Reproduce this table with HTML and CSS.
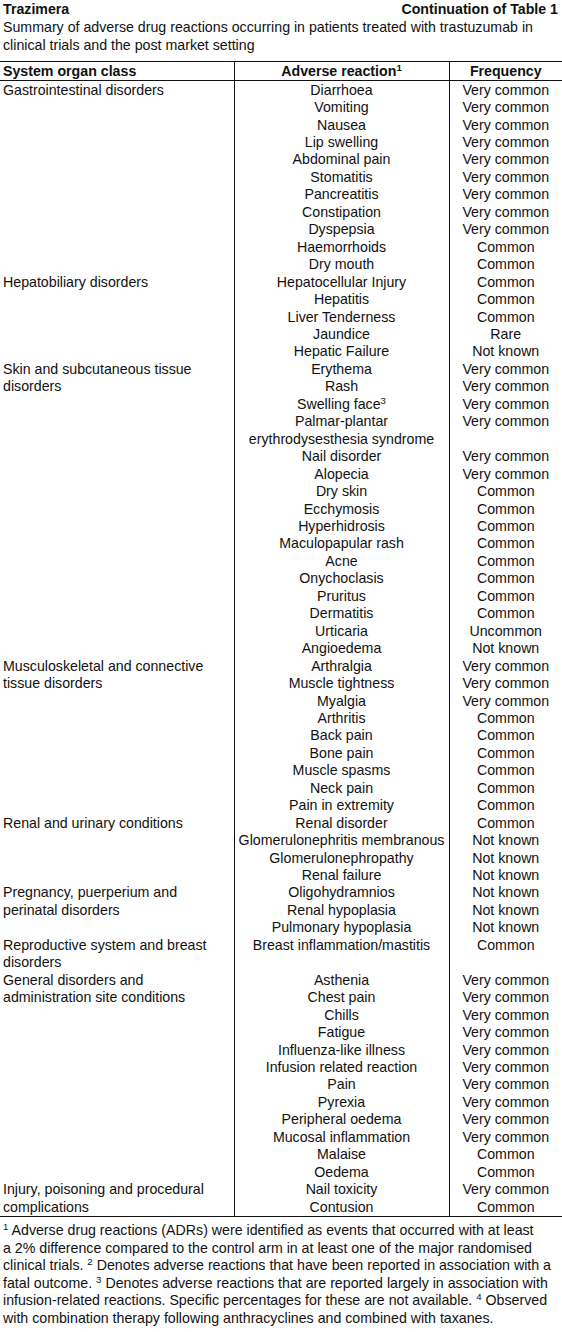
FILE: index.html
```html
<!DOCTYPE html>
<html lang="en">
<head>
<meta charset="utf-8">
<title>Trazimera – Continuation of Table 1</title>
<link rel="stylesheet" href="styles.css">
</head>
<body>
<div class="page">
  <div class="titlebar">
    <span class="brand">Trazimera</span>
    <span class="cont">Continuation of Table 1</span>
  </div>
  <p class="caption">Summary of adverse drug reactions occurring in patients treated with trastuzumab in<br>clinical trials and the post market setting</p>

  <table class="adr">
    <colgroup>
      <col class="c-soc">
      <col class="c-react">
      <col class="c-freq">
    </colgroup>
    <thead>
      <tr>
        <th class="soc">System organ class</th>
        <th>Adverse reaction<sup>1</sup></th>
        <th>Frequency</th>
      </tr>
    </thead>
    <tbody>
      <tr class="first"><td class="soc" rowspan="11">Gastrointestinal disorders</td><td>Diarrhoea</td><td>Very common</td></tr>
      <tr><td>Vomiting</td><td>Very common</td></tr>
      <tr><td>Nausea</td><td>Very common</td></tr>
      <tr><td>Lip swelling</td><td>Very common</td></tr>
      <tr><td>Abdominal pain</td><td>Very common</td></tr>
      <tr><td>Stomatitis</td><td>Very common</td></tr>
      <tr><td>Pancreatitis</td><td>Very common</td></tr>
      <tr><td>Constipation</td><td>Very common</td></tr>
      <tr><td>Dyspepsia</td><td>Very common</td></tr>
      <tr><td>Haemorrhoids</td><td>Common</td></tr>
      <tr><td>Dry mouth</td><td>Common</td></tr>

      <tr><td class="soc" rowspan="5">Hepatobiliary disorders</td><td>Hepatocellular Injury</td><td>Common</td></tr>
      <tr><td>Hepatitis</td><td>Common</td></tr>
      <tr><td>Liver Tenderness</td><td>Common</td></tr>
      <tr><td>Jaundice</td><td>Rare</td></tr>
      <tr><td>Hepatic Failure</td><td>Not known</td></tr>

      <tr><td class="soc" rowspan="16">Skin and subcutaneous tissue<br>disorders</td><td>Erythema</td><td>Very common</td></tr>
      <tr><td>Rash</td><td>Very common</td></tr>
      <tr><td>Swelling face<sup>3</sup></td><td>Very common</td></tr>
      <tr><td>Palmar-plantar<br>erythrodysesthesia syndrome</td><td>Very common</td></tr>
      <tr><td>Nail disorder</td><td>Very common</td></tr>
      <tr><td>Alopecia</td><td>Very common</td></tr>
      <tr><td>Dry skin</td><td>Common</td></tr>
      <tr><td>Ecchymosis</td><td>Common</td></tr>
      <tr><td>Hyperhidrosis</td><td>Common</td></tr>
      <tr><td>Maculopapular rash</td><td>Common</td></tr>
      <tr><td>Acne</td><td>Common</td></tr>
      <tr><td>Onychoclasis</td><td>Common</td></tr>
      <tr><td>Pruritus</td><td>Common</td></tr>
      <tr><td>Dermatitis</td><td>Common</td></tr>
      <tr><td>Urticaria</td><td>Uncommon</td></tr>
      <tr><td>Angioedema</td><td>Not known</td></tr>

      <tr><td class="soc" rowspan="9">Musculoskeletal and connective<br>tissue disorders</td><td>Arthralgia</td><td>Very common</td></tr>
      <tr><td>Muscle tightness</td><td>Very common</td></tr>
      <tr><td>Myalgia</td><td>Very common</td></tr>
      <tr><td>Arthritis</td><td>Common</td></tr>
      <tr><td>Back pain</td><td>Common</td></tr>
      <tr><td>Bone pain</td><td>Common</td></tr>
      <tr><td>Muscle spasms</td><td>Common</td></tr>
      <tr><td>Neck pain</td><td>Common</td></tr>
      <tr><td>Pain in extremity</td><td>Common</td></tr>

      <tr><td class="soc" rowspan="4">Renal and urinary conditions</td><td>Renal disorder</td><td>Common</td></tr>
      <tr><td>Glomerulonephritis membranous</td><td>Not known</td></tr>
      <tr><td>Glomerulonephropathy</td><td>Not known</td></tr>
      <tr><td>Renal failure</td><td>Not known</td></tr>

      <tr><td class="soc" rowspan="3">Pregnancy, puerperium and<br>perinatal disorders</td><td>Oligohydramnios</td><td>Not known</td></tr>
      <tr><td>Renal hypoplasia</td><td>Not known</td></tr>
      <tr><td>Pulmonary hypoplasia</td><td>Not known</td></tr>

      <tr><td class="soc">Reproductive system and breast<br>disorders</td><td>Breast inflammation/mastitis</td><td>Common</td></tr>

      <tr><td class="soc" rowspan="12">General disorders and<br>administration site conditions</td><td>Asthenia</td><td>Very common</td></tr>
      <tr><td>Chest pain</td><td>Very common</td></tr>
      <tr><td>Chills</td><td>Very common</td></tr>
      <tr><td>Fatigue</td><td>Very common</td></tr>
      <tr><td>Influenza-like illness</td><td>Very common</td></tr>
      <tr><td>Infusion related reaction</td><td>Very common</td></tr>
      <tr><td>Pain</td><td>Very common</td></tr>
      <tr><td>Pyrexia</td><td>Very common</td></tr>
      <tr><td>Peripheral oedema</td><td>Very common</td></tr>
      <tr><td>Mucosal inflammation</td><td>Very common</td></tr>
      <tr><td>Malaise</td><td>Common</td></tr>
      <tr><td>Oedema</td><td>Common</td></tr>

      <tr><td class="soc" rowspan="2">Injury, poisoning and procedural<br>complications</td><td>Nail toxicity</td><td>Very common</td></tr>
      <tr><td>Contusion</td><td>Common</td></tr>
    </tbody>
  </table>

  <p class="notes"><sup>1</sup> Adverse drug reactions (ADRs) were identified as events that occurred with at least<br>a 2% difference compared to the control arm in at least one of the major randomised<br>clinical trials. <sup>2</sup> Denotes adverse reactions that have been reported in association with a<br>fatal outcome. <sup>3</sup> Denotes adverse reactions that are reported largely in association with<br>infusion-related reactions. Specific percentages for these are not available. <sup>4</sup> Observed<br>with combination therapy following anthracyclines and combined with taxanes.</p>
</div>
</body>
</html>
```

FILE: styles.css
```css
html, body {
  margin: 0;
  padding: 0;
  background: #ffffff;
}

body {
  font-family: "Liberation Sans Narrow", "Arial Narrow", "Liberation Sans", Arial, sans-serif;
  font-size: 14.2px;
  line-height: 17.45px;
  color: #111111;
}

.page {
  width: 562px;
  padding-top: 1px;
}

.titlebar {
  display: flex;
  justify-content: space-between;
  padding: 0 4px 0 3px;
  font-weight: bold;
}

.caption {
  margin: 0;
  padding: 1px 3px 0;
  line-height: 17.6px;
}

sup {
  font-size: 0.68em;
  line-height: 0;
  vertical-align: 0.5em;
}

.adr {
  width: 562px;
  margin-top: 6px;
  border-collapse: collapse;
  table-layout: fixed;
}

.c-soc { width: 234px; }
.c-react { width: 215px; }
.c-freq { width: 113px; }

.adr th,
.adr td {
  padding: 0;
  text-align: center;
  vertical-align: top;
  border-left: 1px solid #111111;
}

.adr th.soc,
.adr td.soc {
  text-align: left;
  padding-left: 3px;
  border-left: none;
}

.adr thead th {
  font-weight: bold;
  height: 18px;
  line-height: 18px;
  border-top: 1px solid #111111;
  border-bottom: 1px solid #111111;
}

.adr tr.first td {
  padding-top: 1px;
}

.adr tbody tr:last-child td,
.adr tbody td[rowspan="2"] {
  border-bottom: 1px solid #111111;
}

.notes {
  margin: 5px 0 0;
  padding: 0 3px;
  line-height: 17.6px;
}
```
